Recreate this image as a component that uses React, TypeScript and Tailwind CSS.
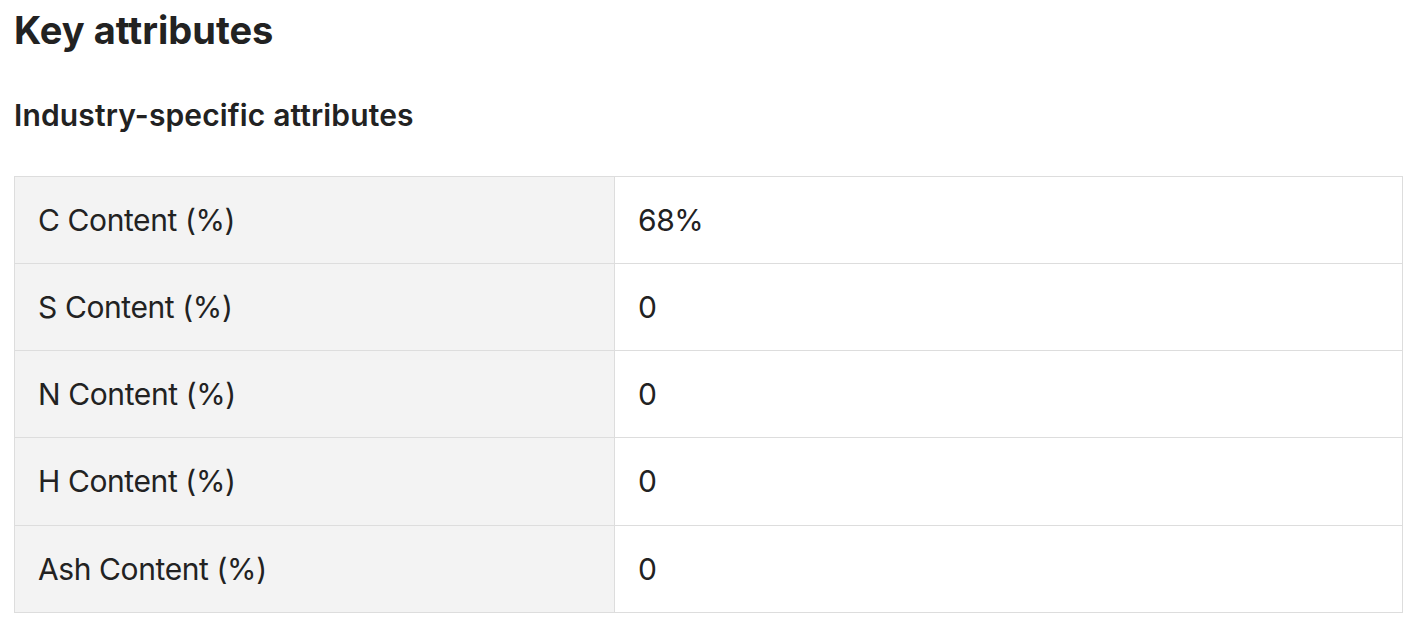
import React from "react";

const rows: [string, string][] = [
  ["C Content (%)", "68%"],
  ["S Content (%)", "0"],
  ["N Content (%)", "0"],
  ["H Content (%)", "0"],
  ["Ash Content (%)", "0"],
];

export default function App() {
  return (
    <div className="bg-white min-h-screen px-[14px] pt-[7px] text-[#222222]" style={{ fontFamily: "Inter, 'Noto Sans', sans-serif" }}>
      <h1 className="text-[38px] font-bold leading-[46px]">Key attributes</h1>
      <h2 className="mt-[44px] text-[30px] font-semibold leading-[36px] tracking-[0.14px]">Industry-specific attributes</h2>
      <table className="mt-[43px] w-[1389px] border-collapse border border-[#dddddd]">
        <tbody>
          {rows.map(([k, v], i) => (
            <tr key={k} className={i === 3 ? "h-[88px]" : "h-[87px]"}>
              <td className="w-[600px] bg-[#f3f3f3] border border-[#dddddd] pl-[23px] text-[30px] tracking-[-0.4px] align-middle">{k}</td>
              <td className="bg-white border border-[#dddddd] pl-[23px] text-[30px] tracking-[-0.4px] align-middle">{v}</td>
            </tr>
          ))}
        </tbody>
      </table>
    </div>
  );
}
